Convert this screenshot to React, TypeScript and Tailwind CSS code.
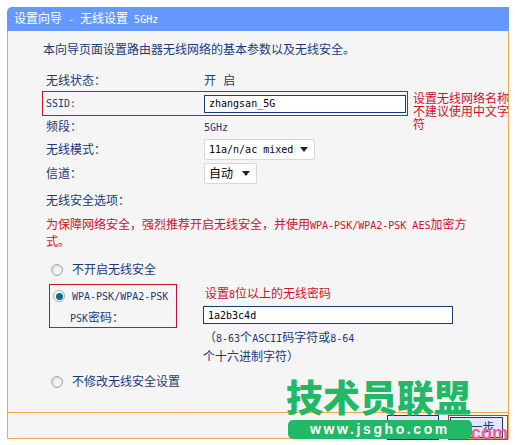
import React from 'react';

const cjk = "font-['DejaVu_Sans_Mono','Noto_Sans_CJK_SC',monospace]";

function Row({ label, children, className = '' }: { label: string; children: React.ReactNode; className?: string }) {
  return (
    <div className={`flex items-center pl-[38px] text-[12px] text-[#1c3a78] ${className}`}>
      <div className="w-[158px] shrink-0">{label}</div>
      {children}
    </div>
  );
}

function Select({ text, width }: { text: string; width: string }) {
  return (
    <div className={`flex h-[21px] items-center justify-between rounded-[2px] border border-[#d8d8d8] bg-white pl-[4px] pr-[6px] text-black ${width}`}>
      <span>{text}</span>
      <svg width="8" height="5" viewBox="0 0 8 5">
        <path d="M0 0h8L4 5z" fill="#222" />
      </svg>
    </div>
  );
}

function Radio({ checked = false }: { checked?: boolean }) {
  return (
    <span className={`flex h-[12px] w-[12px] shrink-0 items-center justify-center rounded-full border border-[#a8a8a8] ${checked ? 'bg-white' : 'bg-[#e4e4e4]'}`}>
      <span className={`h-[7px] w-[7px] rounded-full ${checked ? 'bg-[#0f6a94]' : 'bg-[#f4f4f4]'}`} />
    </span>
  );
}

export default function App() {
  return (
    <div className={`relative h-[445px] w-[515px] overflow-hidden bg-white pl-[7px] pt-[7px] ${cjk}`}>
      <div className="w-[502px]">
        <div className="flex h-[24px] items-center rounded-tl-[5px] bg-[#6699ff] pl-[7px] text-[12px] text-white">
          设置向导<span className="whitespace-pre text-[10px]"> - </span>无线设置<span className="whitespace-pre text-[10px]"> 5GHz</span>
        </div>
        <div className="h-[381px] border-x border-[#f5a64f] bg-[#f5f5f5]">
          <div className="pl-[35px] pt-[12px] text-[12px] leading-[14px] text-[#1c3a78]">本向导页面设置路由器无线网络的基本参数以及无线安全。</div>

          <Row label="无线状态：" className="mt-[17px] h-[14px]">
            <span>开 启</span>
          </Row>

          <div className="relative ml-[34px] mt-[3px] flex h-[25px] w-[366px] items-center border border-[#c8102e] pl-[3px] text-[#1c3a78]">
            <div className="w-[158px] shrink-0 text-[10px]">SSID:</div>
            <div className="flex h-[18px] w-[202px] items-center border border-[#1c3a78] bg-white pl-[4px] text-[10px] text-black">zhangsan_5G</div>
            <div className="absolute left-[370px] top-[1px] whitespace-nowrap text-[12px] leading-[13px] text-[#d0112b]">
              <div>设置无线网络名称</div>
              <div>不建议使用中文字</div>
              <div>符</div>
            </div>
          </div>

          <Row label="频段：" className="mt-[2px] h-[18px]">
            <span className="text-[10px]">5GHz</span>
          </Row>

          <Row label="无线模式：" className="mt-[3px] h-[21px] text-[10px]">
            <Select text="11a/n/ac mixed" width="w-[111px] text-[10px]" />
          </Row>

          <Row label="信道：" className="mt-[3px] h-[21px]">
            <Select text="自动" width="w-[53px]" />
          </Row>

          <div className="ml-[38px] mt-[10px] text-[12px] leading-[14px] text-[#1c3a78]">无线安全选项：</div>
          <div className="ml-[38px] mt-[9px] w-[440px] text-[12px] leading-[17px] text-[#d0112b]">
            为保障网络安全，强烈推荐开启无线安全，并使用<span className="text-[10px]">WPA-PSK/WPA2-PSK AES</span>加密方式。
          </div>

          <div className="ml-[43px] mt-[11px] flex h-[16px] items-center gap-[9px] text-[12px] text-[#1c3a78]">
            <Radio />
            不开启无线安全
          </div>

          <div className="mt-[6px] flex">
            <div className="ml-[41px] h-[44px] w-[128px] shrink-0 border border-[#c8102e] pl-[3px] pt-[3px] text-[#1c3a78]">
              <div className="flex h-[16px] items-center gap-[7px] text-[10px]">
                <Radio checked />
                WPA-PSK/WPA2-PSK
              </div>
              <div className="mt-[5px] pl-[17px] text-[12px]">
                <span className="text-[10px]">PSK</span>密码：
              </div>
            </div>
            <div className="ml-[26px] text-[12px]">
              <div className="ml-[2px] mt-[3px] leading-[14px] text-[#d0112b]">
                设置<span className="text-[10px]">8</span>位以上的无线密码
              </div>
              <div className="mt-[4px] flex h-[18px] w-[250px] items-center border border-[#1c3a78] bg-white pl-[4px] text-[10px] text-black">1a2b3c4d</div>
              <div className="mt-[5px] whitespace-nowrap pl-[1px] leading-[18px] text-[#1c3a78]">
                （<span className="text-[10px]">8-63</span>个<span className="text-[10px]">ASCII</span>码字符或<span className="text-[10px]">8-64</span>
              </div>
              <div className="text-[12px] leading-[18px] text-[#1c3a78]">个十六进制字符）</div>
            </div>
          </div>

          <div className="ml-[43px] mt-[8px] flex h-[16px] items-center gap-[9px] text-[12px] text-[#1c3a78]">
            <Radio />
            不修改无线安全设置
          </div>
        </div>
        <div className="flex h-[27px] items-start justify-end gap-[9px] border border-[#f5a64f] bg-[#f5f5f5] pt-[2px]">
          <div className="flex h-[25px] w-[52px] items-center justify-center border border-[#1c3a78] bg-[#e4e4fa] text-[12px] text-[#1c3a78]">上一步</div>
          <div className="border border-[#b5344e] py-[1px] pl-[1px] pr-[4px]">
            <div className="flex h-[21px] w-[53px] items-center justify-center border border-[#1c3a78] bg-[#e4e4fa] text-[12px] text-[#1c3a78]">下一步</div>
          </div>
        </div>
      </div>

      <div className="absolute left-[471px] top-[424px] font-['Liberation_Sans',sans-serif] text-[18px] font-bold leading-[18px] text-[#ec5f9e]">com</div>
      <div className="absolute left-[286px] top-[374px] whitespace-nowrap font-['Noto_Sans_CJK_SC',sans-serif] text-[37px] font-black leading-[44px] text-[#22b866]">技术员联盟</div>
      <div className="absolute left-[288px] top-[420px] flex h-[19px] w-[184px] items-center justify-center rounded-[5px] bg-[#22b866] font-['Liberation_Sans',sans-serif] text-[14px] font-bold tracking-[2.6px] text-white">www.jsgho.com</div>
    </div>
  );
}
